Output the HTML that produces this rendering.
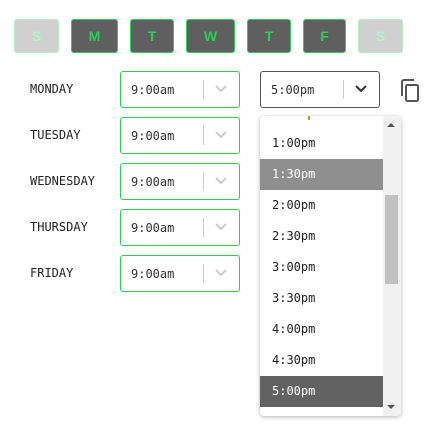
<!DOCTYPE html>
<html><head><style>
body{margin:0;width:436px;height:440px;background:#fff;position:relative;overflow:hidden;font-family:"DejaVu Sans Mono","Liberation Mono",monospace}
.d{position:absolute;top:19px;height:34px;border-radius:3px;background:#5f5f5f;border:1px solid #2ecc5a;box-sizing:border-box;color:#2ecc5a;font:bold 14px "Liberation Sans",sans-serif;text-align:center;line-height:32px}
.d.off{background:#d0d0d0;border-color:#b8ecc5;color:#b8f2c8}
.l{position:absolute;left:30px;font-size:12px;color:#222}
.s{position:absolute;left:120px;width:120px;height:37px;border:1px solid #2ecc5a;border-radius:3px;box-sizing:border-box;font-size:12px;color:#333}
.s span{position:absolute;left:10px;top:11px}
.s i{position:absolute;left:82px;top:8px;width:1px;height:19px;background:#ccc}
.s svg{position:absolute;left:93px;top:12px}
.it{position:absolute;left:0;width:123px;height:31px;line-height:31px;padding-left:12px;box-sizing:border-box;font-size:12px;color:#222}
</style></head><body>
<div class="d off" style="left:14px;width:45px">S</div>
<div class="d" style="left:71px;width:47px">M</div>
<div class="d" style="left:130px;width:44px">T</div>
<div class="d" style="left:186px;width:49px">W</div>
<div class="d" style="left:247px;width:44px">T</div>
<div class="d" style="left:303px;width:43px">F</div>
<div class="d off" style="left:358px;width:45px">S</div>

<div class="l" style="top:82px">MONDAY</div>
<div class="l" style="top:128px">TUESDAY</div>
<div class="l" style="top:174px">WEDNESDAY</div>
<div class="l" style="top:220px">THURSDAY</div>
<div class="l" style="top:266px">FRIDAY</div>

<div class="s" style="top:71px"><span>9:00am</span><i></i><svg width="14" height="10"><path d="M2 2l5 5 5-5" stroke="#ccc" stroke-width="2" fill="none"/></svg></div>
<div class="s" style="top:117px"><span>9:00am</span><i></i><svg width="14" height="10"><path d="M2 2l5 5 5-5" stroke="#ccc" stroke-width="2" fill="none"/></svg></div>
<div class="s" style="top:163px"><span>9:00am</span><i></i><svg width="14" height="10"><path d="M2 2l5 5 5-5" stroke="#ccc" stroke-width="2" fill="none"/></svg></div>
<div class="s" style="top:209px"><span>9:00am</span><i></i><svg width="14" height="10"><path d="M2 2l5 5 5-5" stroke="#ccc" stroke-width="2" fill="none"/></svg></div>
<div class="s" style="top:255px"><span>9:00am</span><i></i><svg width="14" height="10"><path d="M2 2l5 5 5-5" stroke="#ccc" stroke-width="2" fill="none"/></svg></div>

<div class="s" style="top:71px;left:260px;border-color:#555"><span>5:00pm</span><i></i><svg width="14" height="10"><path d="M2 2l5 5 5-5" stroke="#333" stroke-width="2" fill="none"/></svg></div>
<svg style="position:absolute;left:399px;top:79px" width="22" height="24" viewBox="0 0 22 24"><path d="M3 17V3a2 2 0 0 1 2-2h10" stroke="#555" stroke-width="2" fill="none"/><rect x="7" y="6" width="12" height="16" rx="1.5" stroke="#555" stroke-width="2" fill="none"/></svg>

<div style="position:absolute;left:260px;top:116px;width:141px;height:300px;border-radius:4px;background:#fff;box-shadow:0 1px 4px rgba(0,0,0,.3);overflow:hidden">
<div style="position:absolute;left:48px;top:0;width:2px;height:4px;background:#c90"></div>
<div class="it" style="top:12px">1:00pm</div>
<div class="it" style="top:43px;background:#8f8f8f;color:#fff">1:30pm</div>
<div class="it" style="top:74px">2:00pm</div>
<div class="it" style="top:105px">2:30pm</div>
<div class="it" style="top:136px">3:00pm</div>
<div class="it" style="top:167px">3:30pm</div>
<div class="it" style="top:198px">4:00pm</div>
<div class="it" style="top:229px">4:30pm</div>
<div class="it" style="top:260px;background:#626262;color:#fff">5:00pm</div>
<div style="position:absolute;left:123px;top:0;width:18px;height:300px;background:#f1f1f1"></div>
<div style="position:absolute;left:125px;top:79px;width:13px;height:89px;background:#c1c1c1"></div>
<div style="position:absolute;left:127px;top:7px;width:0;height:0;border-left:4px solid transparent;border-right:4px solid transparent;border-bottom:4px solid #555"></div>
<div style="position:absolute;left:127px;top:289px;width:0;height:0;border-left:4px solid transparent;border-right:4px solid transparent;border-top:4px solid #555"></div>
</div>
</body></html>
